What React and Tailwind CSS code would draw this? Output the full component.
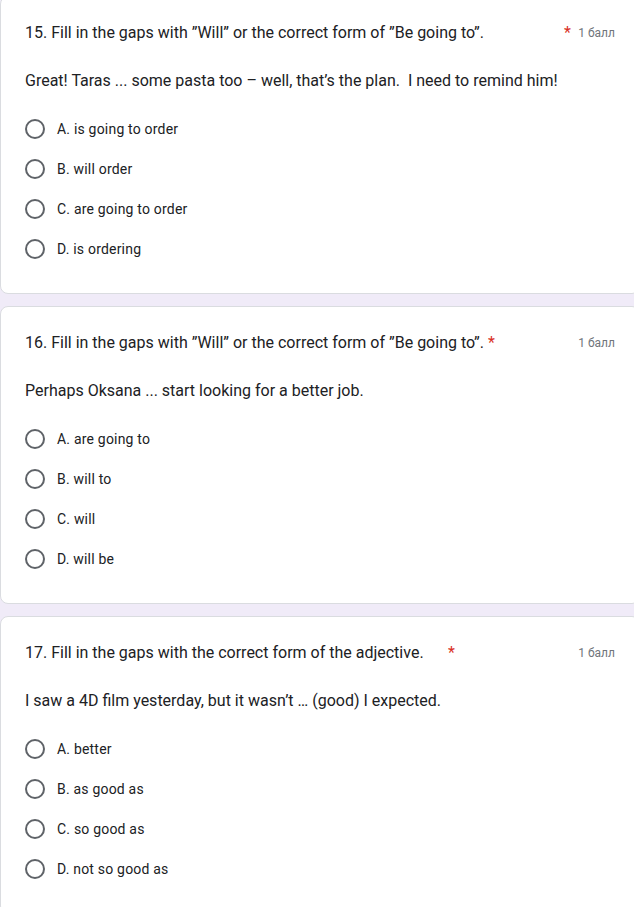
import React from "react";

const questions = [
  {
    title: "15. Fill in the gaps with ”Will” or the correct form of ”Be going to”.",
    titleW: "w-[535px]",
    body: "Great! Taras ... some pasta too – well, that’s the plan.  I need to remind him!",
    options: ["A. is going to order", "B. will order", "C. are going to order", "D. is ordering"],
  },
  {
    title: "16. Fill in the gaps with ”Will” or the correct form of ”Be going to”.",
    titleW: "",
    body: "Perhaps Oksana ... start looking for a better job.",
    options: ["A. are going to", "B. will to", "C. will", "D. will be"],
  },
  {
    title: "17. Fill in the gaps with the correct form of the adjective.",
    titleW: "w-[419px]",
    body: "I saw a 4D film yesterday, but it wasn’t … (good) I expected.",
    options: ["A. better", "B. as good as", "C. so good as", "D. not so good as"],
  },
];

function Radio() {
  return <div className="w-5 h-5 rounded-full border-2 border-[#5f6368] shrink-0" />;
}

function Card({ q }) {
  return (
    <div className="w-[640px] shrink-0 bg-white border border-[#dadce0] rounded-lg p-6">
      <div className="flex items-start justify-between">
        <div className="flex text-[16px] leading-6 text-[#202124]">
          <span className={"whitespace-pre " + q.titleW}>{q.title}</span>
          <span className="text-[#d93025] ml-1">*</span>
        </div>
        <div className="text-[12px] leading-6 text-[#70757a] whitespace-nowrap">1 балл</div>
      </div>
      <div className="mt-6 text-[16px] leading-6 text-[#202124] whitespace-pre">{q.body}</div>
      <div className="mt-4 flex flex-col">
        {q.options.map((o) => (
          <div key={o} className="h-10 flex items-center gap-3">
            <Radio />
            <span className="text-[14px] text-[#202124] tracking-[0.2px]">{o}</span>
          </div>
        ))}
      </div>
    </div>
  );
}

export default function App() {
  return (
    <div
      className="w-[634px] h-[907px] overflow-hidden bg-[#f0ebf8]"
      style={{ fontFamily: "Roboto, 'Noto Sans', sans-serif" }}
    >
      <div className="flex flex-col gap-3 -mt-[4px]">
        {questions.map((q, i) => (
          <Card key={i} q={q} />
        ))}
      </div>
    </div>
  );
}
